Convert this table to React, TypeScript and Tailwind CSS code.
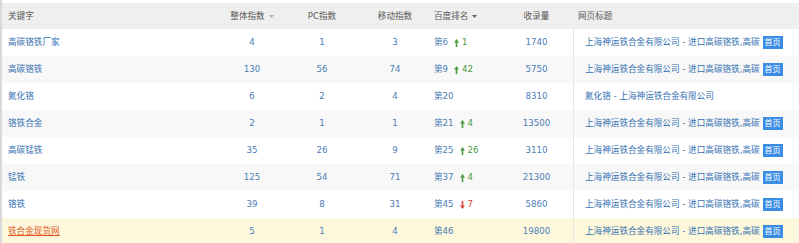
import React from "react";

type Row = {
  kw: string;
  total: string;
  pc: string;
  mobile: string;
  rank: string;
  delta?: { dir: "up" | "down"; v: string };
  count: string;
  title: string;
  badge: boolean;
};

const rows: Row[] = [
  { kw: "高碳铬铁厂家", total: "4", pc: "1", mobile: "3", rank: "第6", delta: { dir: "up", v: "1" }, count: "1740", title: "上海神运铁合金有限公司 - 进口高碳铬铁,高碳", badge: true },
  { kw: "高碳铬铁", total: "130", pc: "56", mobile: "74", rank: "第9", delta: { dir: "up", v: "42" }, count: "5750", title: "上海神运铁合金有限公司 - 进口高碳铬铁,高碳", badge: true },
  { kw: "氮化铬", total: "6", pc: "2", mobile: "4", rank: "第20", count: "8310", title: "氮化铬 - 上海神运铁合金有限公司", badge: false },
  { kw: "铬铁合金", total: "2", pc: "1", mobile: "1", rank: "第21", delta: { dir: "up", v: "4" }, count: "13500", title: "上海神运铁合金有限公司 - 进口高碳铬铁,高碳", badge: true },
  { kw: "高碳锰铁", total: "35", pc: "26", mobile: "9", rank: "第25", delta: { dir: "up", v: "26" }, count: "3110", title: "上海神运铁合金有限公司 - 进口高碳铬铁,高碳", badge: true },
  { kw: "锰铁", total: "125", pc: "54", mobile: "71", rank: "第37", delta: { dir: "up", v: "4" }, count: "21300", title: "上海神运铁合金有限公司 - 进口高碳铬铁,高碳", badge: true },
  { kw: "铬铁", total: "39", pc: "8", mobile: "31", rank: "第45", delta: { dir: "down", v: "7" }, count: "5860", title: "上海神运铁合金有限公司 - 进口高碳铬铁,高碳", badge: true },
  { kw: "铁合金现货网", total: "5", pc: "1", mobile: "4", rank: "第46", count: "19800", title: "上海神运铁合金有限公司 - 进口高碳铬铁,高碳", badge: true },
];

const grid = "grid grid-cols-[210px_80px_60px_80px_68px_73px_1fr] items-center";

function Arrow({ dir }: { dir: "up" | "down" }) {
  const color = dir === "up" ? "#4a9a40" : "#d9453e";
  return (
    <svg width="5" height="8" viewBox="0 0 5 8" className="inline-block">
      {dir === "up" ? (
        <g fill={color}>
          <polygon points="2.5,0 5,3.5 0,3.5" />
          <rect x="1.7" y="3" width="1.6" height="5" />
        </g>
      ) : (
        <g fill={color}>
          <polygon points="2.5,8 5,4.5 0,4.5" />
          <rect x="1.7" y="0" width="1.6" height="5" />
        </g>
      )}
    </svg>
  );
}

function Caret({ color }: { color: string }) {
  return (
    <svg width="5" height="3" viewBox="0 0 5 3" className="ml-[4px] inline-block">
      <polygon points="0,0 5,0 2.5,3" fill={color} />
    </svg>
  );
}

export default function App() {
  return (
    <div
      className="w-[799px] h-[243px] overflow-hidden bg-white pt-[3px] border-l-[2px] border-[#d9d9d9] text-[8.6px] leading-none"
      style={{ fontFamily: '"DejaVu Sans", "Noto Sans CJK SC", sans-serif' }}
    >
      <div className={`${grid} h-[26px] bg-[#efefef] text-[#5a5a5a]`}>
        <div className="pl-[6px]">关键字</div>
        <div className="flex items-center justify-center">
          整体指数
          <Caret color="#b0b0b0" />
        </div>
        <div className="text-center">PC指数</div>
        <div className="text-center pl-[6px]">移动指数</div>
        <div className="flex items-center pl-[2px]">
          百度排名
          <Caret color="#666" />
        </div>
        <div className="text-center">收录量</div>
        <div className="pl-[5px]">网页标题</div>
      </div>
      {rows.map((r, i) => {
        const last = i === rows.length - 1;
        const bg = last ? "bg-[#fdf8dc]" : i % 2 === 1 ? "bg-[#f8f8f8]" : "bg-white";
        return (
          <div key={i} className={`${grid} h-[27px] ${bg} text-[#4b7db6]`}>
            <div className="pl-[6px]">
              {last ? (
                <span className="text-[#e0571f] underline underline-offset-[1px]">{r.kw}</span>
              ) : (
                <span className="text-[#3470b2]">{r.kw}</span>
              )}
            </div>
            <div className="text-center">{r.total}</div>
            <div className="text-center">{r.pc}</div>
            <div className="text-center pl-[6px]">{r.mobile}</div>
            <div className="flex items-center pl-[2px]">
              <span>{r.rank}</span>
              {r.delta && (
                <span className={`ml-[6px] flex items-center gap-[3px] ${r.delta.dir === "up" ? "text-[#4a9a40]" : "text-[#d9453e]"}`}>
                  <Arrow dir={r.delta.dir} />
                  {r.delta.v}
                </span>
              )}
            </div>
            <div className="text-center">{r.count}</div>
            <div className="h-full flex items-center border-l border-[#e6e6e6] pl-[11px] text-[#3470b2] whitespace-nowrap">
              <span>{r.title}</span>
              {r.badge && (
                <span className="ml-[3px] bg-[#3a8de4] text-white text-[8px] h-[13px] px-[2px] flex items-center">首页</span>
              )}
            </div>
          </div>
        );
      })}
    </div>
  );
}
